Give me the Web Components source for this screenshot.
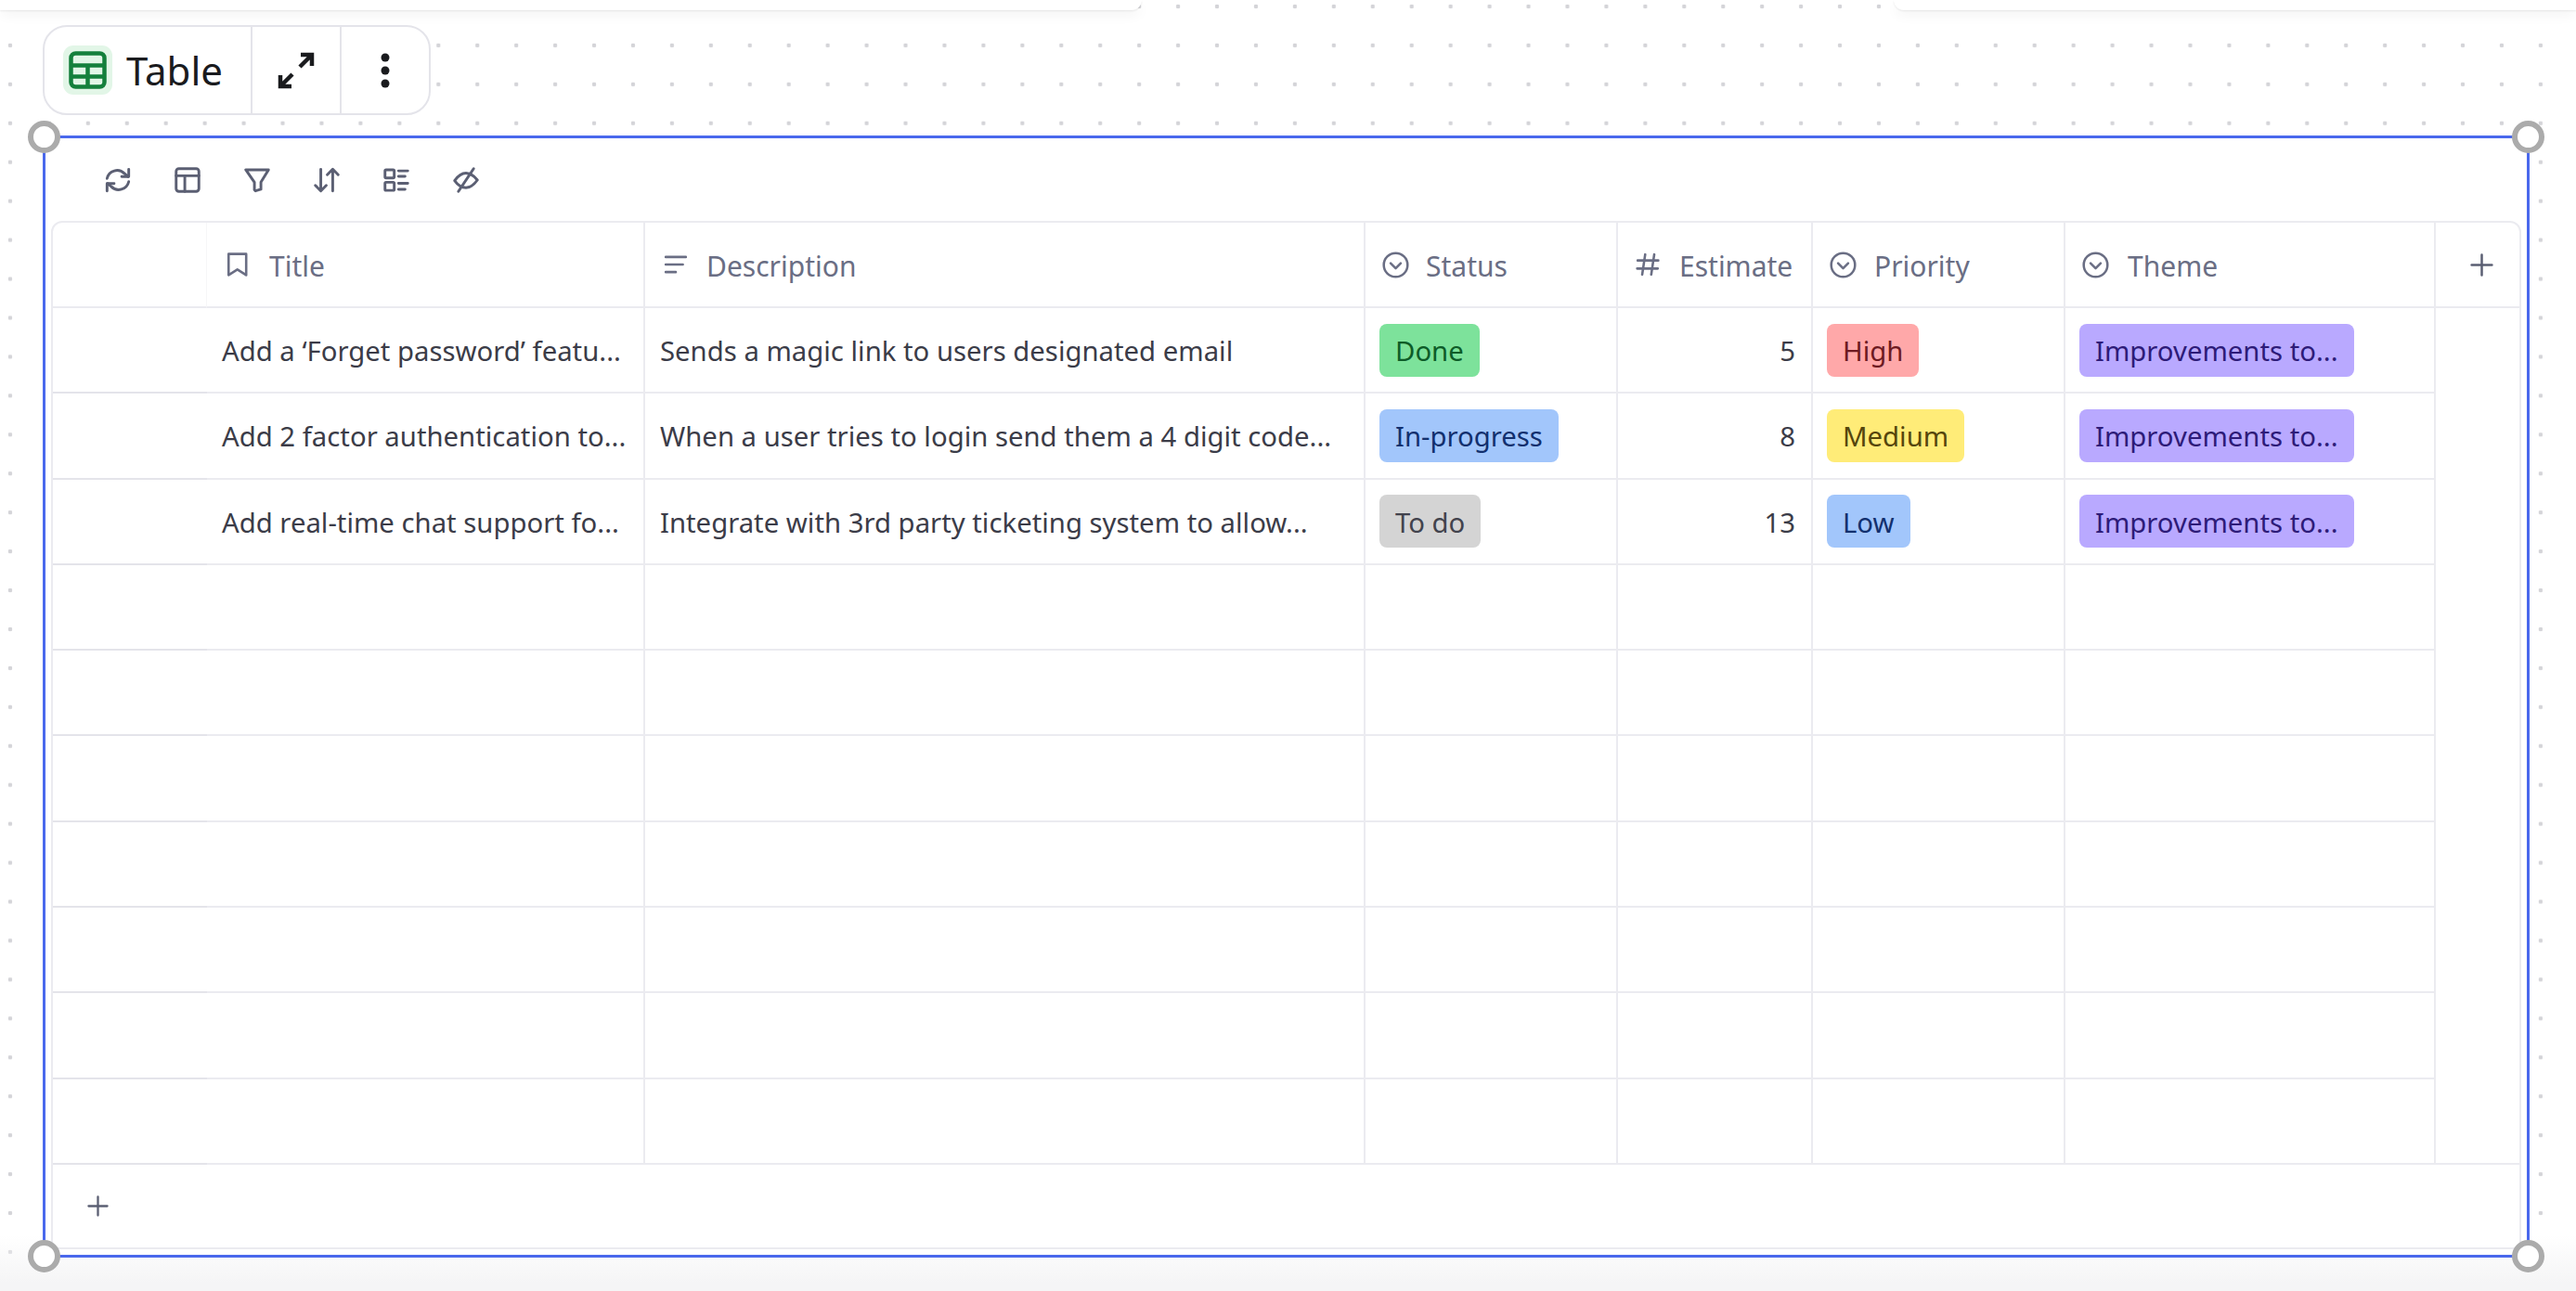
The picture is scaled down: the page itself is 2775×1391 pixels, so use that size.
<!DOCTYPE html>
<html>
<head>
<meta charset="utf-8">
<title>Table</title>
<style>
    html, body { margin: 0; padding: 0; height: 100%; }
    body { font-family: "Noto Sans", sans-serif; overflow: hidden; }
</style>
</head>
<body>
<board-canvas>
    <widget-bar></widget-bar>
    <table-frame>
        <view-tools></view-tools>
        <data-table></data-table>
    </table-frame>
</board-canvas>

<script>
const icon = (inner, size, weight = 2.4) =>
    `<svg xmlns="http://www.w3.org/2000/svg" viewBox="0 0 24 24" width="${size}" height="${size}" fill="none" stroke="currentColor" stroke-width="${weight}" stroke-linecap="round" stroke-linejoin="round">${inner}</svg>`;

const ICONS = {
    refresh: `<path d="M2 10.500a9.500 9.500 0 0 1 16-4.600l3.500 2.900"/><path d="M22 2v6.800h-6.500"/><path d="M22 13.500a9.500 9.500 0 0 1-16 4.600l-3.500-2.900"/><path d="M2 22v-6.800h6.500"/>`,
    layout: `<rect x="1.500" y="1.500" width="21" height="21" rx="2.500"/><path d="M1.500 8h21M9.500 8v14.500"/>`,
    funnel: `<path d="M1.500 2.500h21L15.500 14v6.500l-5 1.500-1-1V14Z"/>`,
    sort: `<path d="M6.500 2v20M1.500 17l5 5 5-5"/><path d="M17.500 22V2M12.500 7l5-5 5 5"/>`,
    tasks: `<rect x="1.500" y="2.500" width="8.500" height="7.500" rx="1"/><rect x="1.500" y="14" width="8.500" height="7.500" rx="1"/><path d="M14 3.500h8.500M14 8.500h6M14 15h8.500M14 20.500h6"/>`,
    eye: `<path d="M1.500 12.500C5 7.500 8.500 5.500 12 5.500s7 2 10.500 6.500c-3.500 5-7 7-10.500 7s-7-1.500-10.500-6.500Z"/><path d="M19 1.500 5 22.500"/>`,
    bookmark: `<path d="M3 1.500h17.500v21L11.750 17 3 22.500Z"/>`,
    lines: `<path d="M2 4.500h20M2 12h17M2 19.500h10"/>`,
    chevron: `<circle cx="12" cy="12" r="10.600"/><path d="M7.500 10.500 12 15l4.500-4.500"/>`,
    hash: `<path d="M9.500 2 6.500 22M18.500 2l-3 20M2 8h20.500M1.500 16h20.500"/>`,
    plus: `<path d="M12 1.500v21M1.500 12h21"/>`,
};

// canvas with the dotted grid and the bits of panels at the very top
class BoardCanvas extends HTMLElement {
    constructor() {
        super();
        this.attachShadow({ mode: "open" }).innerHTML = `
        <style>
            :host {
                display: block;
                width: 2775px;
                height: 1391px;
                overflow: hidden;
                box-sizing: border-box;
                padding-top: 27px;
                background-color: #fff;
                background-image:
                    radial-gradient(circle at center, #d4d4d8 0, #d4d4d8 2px, transparent 2.6px);
                background-size: 41.95px 41.95px;
                background-position: -10px -14px;
                position: relative;
            }
            .card {
                position: absolute; top: 0; height: 11px; background: #fff;
                box-shadow: 0 1px 2px rgba(0,0,0,.08), 0 6px 14px -2px rgba(0,0,0,.07);
            }
            .card.left { left: 0; width: 1230px; border-bottom-right-radius: 14px; }
            .card.right { left: 2040px; right: 0; border-bottom-left-radius: 14px; }
            .bottom {
                position: absolute; left: 0; right: 0; bottom: 0; height: 60px;
                background: linear-gradient(rgba(245,245,246,0), #f5f5f6 85%);
            }
            .stack { position: relative; display: flex; flex-direction: column; align-items: flex-start; padding-left: 46px; }
        </style>
        <div class="card left"></div>
        <div class="card right"></div>
        <div class="bottom"></div>
        <div class="stack"><slot></slot></div>`;
    }
}

class WidgetBar extends HTMLElement {
    constructor() {
        super();
        this.attachShadow({ mode: "open" }).innerHTML = `
        <style>
            :host {
                display: flex;
                box-sizing: border-box;
                width: 418px;
                height: 97px;
                background: #fff;
                border: 2px solid #e4e4ea;
                border-radius: 26px;
                color: #1a1b1e;
            }
            .name {
                width: 224px;
                box-sizing: border-box;
                display: flex;
                align-items: center;
                padding-left: 20px;
                gap: 15px;
                border-right: 2px solid #e4e4ea;
                font-size: 42px;
            }
            .tile {
                width: 53px; height: 53px;
                border-radius: 11px;
                background: #e2f6e7;
                display: flex; align-items: center; justify-content: center;
                color: #14803c;
            }
            .btn {
                width: 94px;
                flex: none;
                box-sizing: border-box;
                display: flex; align-items: center; justify-content: center;
            }
            .btn + .btn { border-left: 2px solid #e4e4ea; width: 96px; }
        </style>
        <div class="name">
            <span class="tile">
                <svg width="41" height="41" viewBox="0 0 41 41" fill="none" stroke="currentColor" stroke-width="4.500" stroke-linejoin="round"><rect x="2.500" y="2.500" width="36" height="36" rx="5"/><path d="M2.500 15.500h36M2.500 27.500h36M20.500 15.500v23"/></svg>
            </span>
            <span>Table</span>
        </div>
        <div class="btn">
            <svg width="40" height="40" viewBox="0 0 40 40" fill="none" stroke="currentColor" stroke-width="4.500"><path d="M24 16 37 3M25 3h12v12"/><path d="M16 24 3 37M3 25v12h12"/></svg>
        </div>
        <div class="btn">
            <svg width="10" height="38" viewBox="0 0 10 38" fill="currentColor"><circle cx="5" cy="5" r="4.500"/><circle cx="5" cy="19" r="4.500"/><circle cx="5" cy="33" r="4.500"/></svg>
        </div>`;
    }
}

// selected frame, blue outline with round grab handles in the corners
class TableFrame extends HTMLElement {
    constructor() {
        super();
        this.attachShadow({ mode: "open" }).innerHTML = `
        <style>
            :host {
                display: flex;
                flex-direction: column;
                position: relative;
                box-sizing: border-box;
                width: 2679px;
                height: 1209px;
                margin-top: 22px;
                background: #fff;
                border: 3px solid #4a68ec;
                padding: 0 6px 6px 6px;
            }
            .h {
                position: absolute;
                width: 35px; height: 35px;
                box-sizing: border-box;
                border-radius: 50%;
                background: #fff;
                border: 6px solid #ababab;
            }
            .tl { left: -19px; top: -19px; }
            .tr { right: -19px; top: -19px; }
            .bl { left: -19px; bottom: -19px; }
            .br { right: -19px; bottom: -19px; }
        </style>
        <slot></slot>
        <span class="h tl"></span><span class="h tr"></span>
        <span class="h bl"></span><span class="h br"></span>`;
    }
}

class ViewTools extends HTMLElement {
    constructor() {
        super();
        const names = ["refresh", "layout", "funnel", "sort", "tasks", "eye"];
        this.attachShadow({ mode: "open" }).innerHTML = `
        <style>
            :host {
                display: flex;
                align-items: center;
                height: 89px;
                flex: none;
                padding-left: 58px;
                gap: 47px;
                color: #5b5f73;
            }
            svg { display: block; }
        </style>
        ${names.map(n => icon(ICONS[n], 28, 2.5)).join("")}`;
    }
}

class StatusChip extends HTMLElement {
    constructor() {
        super();
        this.attachShadow({ mode: "open" }).innerHTML = `
        <style>
            :host {
                display: inline-flex;
                align-items: center;
                box-sizing: border-box;
                height: 57px;
                padding: 2px 17px 0;
                border-radius: 8px;
                white-space: nowrap;
            }
            :host([tone="green"]) { background: #7de29b; color: #0d5c28; }
            :host([tone="blue"]) { background: #a2c6fb; color: #12306e; }
            :host([tone="gray"]) { background: #d4d4d4; color: #42434d; }
            :host([tone="red"]) { background: #ffa8a9; color: #6d1a22; }
            :host([tone="yellow"]) { background: #ffec78; color: #55460c; }
            :host([tone="purple"]) { background: #b9a9ff; color: #2d1b78; }
        </style>
        <slot></slot>`;
    }
}

class DataTable extends HTMLElement {
    constructor() {
        super();
        // icon, label, icon size, left padding, gap to label, stroke
        const heads = [
            ["bookmark", "Title", 26, 20, 21, 2.4],
            ["lines", "Description", 26, 20, 20, 2.4],
            ["chevron", "Status", 29, 18, 18, 2.1],
            ["hash", "Estimate", 26, 19, 21, 2.4],
            ["chevron", "Priority", 29, 18, 19, 2.1],
            ["chevron", "Theme", 29, 18, 20, 2.1],
        ];
        const rows = [
            ["Add a ‘Forget password’ featu...", "Sends a magic link to users designated email", ["green", "Done"], 5, ["red", "High"]],
            ["Add 2 factor authentication to...", "When a user tries to login send them a 4 digit code...", ["blue", "In-progress"], 8, ["yellow", "Medium"]],
            ["Add real-time chat support fo...", "Integrate with 3rd party ticketing system to allow...", ["gray", "To do"], 13, ["blue", "Low"]],
        ];
        const chip = ([tone, text]) => `<status-chip tone="${tone}">${text}</status-chip>`;
        let body = "";
        for (const r of rows) {
            body += `<div class="c gut"></div>
                <div class="c title">${r[0]}</div>
                <div class="c desc">${r[1]}</div>
                <div class="c pill">${chip(r[2])}</div>
                <div class="c num">${r[3]}</div>
                <div class="c pill">${chip(r[4])}</div>
                <div class="c pill">${chip(["purple", "Improvements to..."])}</div>`;
            if (r === rows[0]) body += `<div class="c last"></div>`;
        }
        for (let i = 0; i < 7; i++) {
            body += `<div class="c gut"></div><div class="c"></div><div class="c"></div><div class="c"></div><div class="c"></div><div class="c"></div><div class="c"></div>`;
        }
        this.attachShadow({ mode: "open" }).innerHTML = `
        <style>
            :host {
                display: flex;
                flex-direction: column;
                flex: 1;
                box-sizing: border-box;
                border: 2px solid #ebebf0;
                border-radius: 12px 12px 0 0;
                font-size: 29.3px;
                color: #3b3c48;
            }
            .grid {
                display: grid;
                grid-template-columns: 166px 472px 776px 272px 210px 272px 399px 1fr;
                grid-template-rows: 92px repeat(10, 92.3px);
            }
            .c {
                box-sizing: border-box;
                display: flex;
                align-items: center;
                min-width: 0;
                white-space: nowrap;
                border-right: 2px solid #ebebf0;
                border-bottom: 2px solid #ebebf0;
            }
            .gut { border-right: 0; border-bottom-color: #e4e4ea; }
            .head.gut { border-right: 1px solid #f6f6f8; border-bottom-color: #ebebf0; }
            .last { border-right: 0; grid-column: 8; grid-row: span 10; }
            .head { color: #6a6e84; font-size: 30px; padding-top: 3px; }
            .head svg { flex: none; margin-top: -3px; }
            .head.last { grid-row: auto; justify-content: center; padding-left: 8px; color: #5b5f73; }
            .title { padding: 2px 0 0 16px; }
            .desc { padding: 2px 0 0 16px; }
            .pill { padding-left: 15px; }
            .num { justify-content: flex-end; padding: 2px 17px 0 0; }
            .foot {
                flex: 1;
                display: flex;
                align-items: center;
                padding-left: 37px;
                color: #5b5f73;
            }
        </style>
        <div class="grid">
            <div class="c head gut"></div>
            ${heads.map(([n, t, s, p, g, w]) => `<div class="c head" style="padding-left:${p}px;gap:${g}px">${icon(ICONS[n], s, w)}<span>${t}</span></div>`).join("")}
            <div class="c head last">${icon(ICONS.plus, 25)}</div>
            ${body}
        </div>
        <div class="foot">${icon(ICONS.plus, 23)}</div>`;
    }
}

customElements.define("board-canvas", BoardCanvas);
customElements.define("widget-bar", WidgetBar);
customElements.define("table-frame", TableFrame);
customElements.define("view-tools", ViewTools);
customElements.define("status-chip", StatusChip);
customElements.define("data-table", DataTable);
</script>
</body>
</html>
